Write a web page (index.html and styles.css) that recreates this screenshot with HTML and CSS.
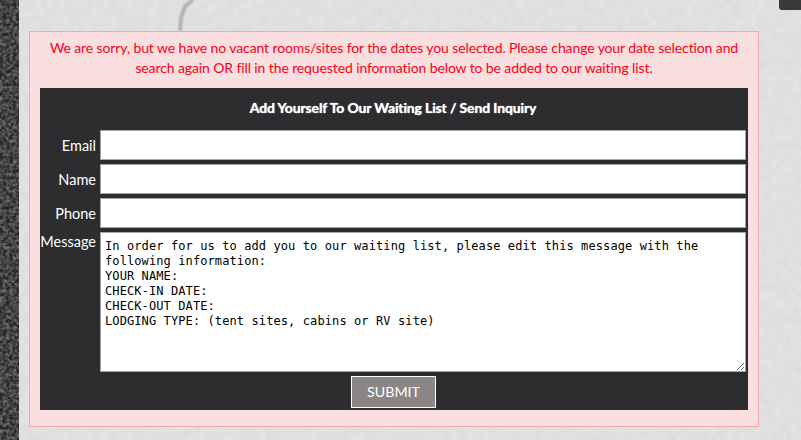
FILE: index.html
```html
<!DOCTYPE html>
<html lang="en">
<head>
<meta charset="utf-8">
<title>Waiting List</title>
<link rel="stylesheet" href="styles.css">
</head>
<body>
<svg class="texture" width="801" height="440" aria-hidden="true">
  <defs>
    <filter id="grain" x="0" y="0" width="100%" height="100%" color-interpolation-filters="sRGB">
      <feTurbulence type="fractalNoise" baseFrequency="0.12" numOctaves="4" seed="4"/>
      <feColorMatrix type="saturate" values="0"/>
      <feComponentTransfer>
        <feFuncA type="linear" slope="0" intercept="0.06"/>
      </feComponentTransfer>
    </filter>
    <filter id="grain-dark" x="0" y="0" width="100%" height="100%" color-interpolation-filters="sRGB">
      <feTurbulence type="fractalNoise" baseFrequency="0.3" numOctaves="3" seed="9"/>
      <feColorMatrix type="saturate" values="0"/>
      <feComponentTransfer>
        <feFuncR type="linear" slope="1.6" intercept="-0.55"/>
        <feFuncG type="linear" slope="1.6" intercept="-0.55"/>
        <feFuncB type="linear" slope="1.6" intercept="-0.55"/>
        <feFuncA type="linear" slope="0" intercept="0.5"/>
      </feComponentTransfer>
    </filter>
    <filter id="soft" x="-100%" y="-20%" width="300%" height="140%"><feGaussianBlur stdDeviation="1.2"/></filter>
  </defs>
  <rect x="19" width="782" height="440" fill="#e6e6e6"/>
  <rect x="19" width="782" height="440" filter="url(#grain)"/>
  <rect x="0" width="19" height="440" fill="#484848"/>
  <rect x="0" width="19" height="440" filter="url(#grain-dark)"/>
  <path d="M193 0 L185 6 L181 18 L180 31" stroke="#a6a6a6" stroke-width="3" fill="none" filter="url(#soft)"/>
</svg>
<div class="corner-tab"></div>
<main class="page">
  <section class="alert">
    <p class="alert-text">We are sorry, but we have no vacant rooms/sites for the dates you selected. Please change your date selection and search again OR fill in the requested information below to be added to our waiting list.</p>
    <form class="panel">
      <h2 class="panel-title">Add Yourself To Our Waiting List / Send Inquiry</h2>
      <div class="row"><label class="row-label" for="email">Email</label><input class="field" id="email" type="text"></div>
      <div class="row"><label class="row-label" for="name">Name</label><input class="field" id="name" type="text"></div>
      <div class="row"><label class="row-label" for="phone">Phone</label><input class="field" id="phone" type="text"></div>
      <div class="row row-top"><label class="row-label" for="message">Message</label><textarea class="field field-area" id="message">In order for us to add you to our waiting list, please edit this message with the following information:
YOUR NAME:
CHECK-IN DATE:
CHECK-OUT DATE:
LODGING TYPE: (tent sites, cabins or RV site)</textarea></div>
      <div class="actions"><button class="submit" type="button">SUBMIT</button></div>
    </form>
  </section>
</main>
</body>
</html>
```
FILE: styles.css
```css
* { box-sizing: border-box; }
html, body { margin: 0; height: 440px; overflow: hidden; }
body { position: relative; background: #e0e0e0; font-family: Lato, "Open Sans", sans-serif; }
.texture { position: absolute; left: 0; top: 0; display: block; }
.corner-tab { position: absolute; right: 0; top: 0; width: 22px; height: 10px; background: #3a383b; border-bottom-left-radius: 3px; }
.page { position: relative; padding: 31px 42px 0 29px; }
.alert { background: #f9dfdf; border: 1px solid #f6a9a5; padding: 6px 10px 16px; }
.alert-text { margin: 0 0 10px; color: #fb0018; font-size: 14px; letter-spacing: -0.11px; line-height: 20px; text-align: center; }
.panel { background: #2d2c2e; padding-right: 2px; }
.panel-title { margin: 0; height: 42px; color: #fff; font-size: 14px; font-weight: 700; line-height: 40px; text-align: center; letter-spacing: -0.14px; text-shadow: 0 0 1px #fff; }
.row { display: flex; align-items: center; margin-bottom: 4px; }
.row-top { align-items: flex-start; margin-bottom: 4px; }
.row-label { width: 60px; padding: 2px 4px 0 0; color: #fff; font-size: 14.5px; line-height: 20px; text-align: right; white-space: nowrap; }
.row-top .row-label { padding-top: 0; }
.field { display: block; flex: 1; min-width: 0; height: 30px; margin: 0; padding: 2px 4px; background: #fff; border: 1px solid #a3a3a3; border-radius: 0; outline: 0; }
.field-area { height: 140px; padding: 6px 4px 2px; color: #000; font-family: "DejaVu Sans Mono", monospace; font-size: 12px; letter-spacing: 0.1px; line-height: 15px; resize: vertical; }
.actions { display: flex; justify-content: center; padding-bottom: 2px; }
.submit { width: 85px; height: 32px; margin: 0; padding: 0 0 0 1px; background: #8b8585; border: 1px solid #fff; color: #fff; font-family: inherit; font-size: 14.2px; line-height: 20px; }
```
